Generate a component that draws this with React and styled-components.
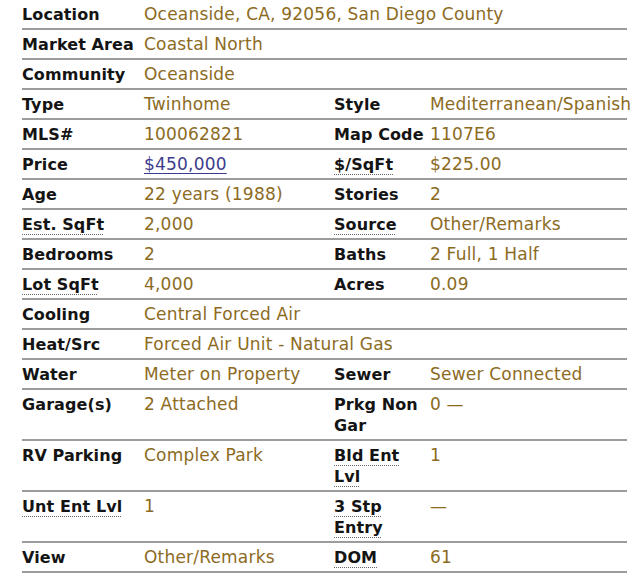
import React from 'react'
import styled, { createGlobalStyle } from 'styled-components'

const GlobalStyle = createGlobalStyle`
  body {
    margin: 0;
    background: #fff;
    font-family: "DejaVu Sans", Verdana, sans-serif;
  }
`

const Table = styled.table`
  margin-left: 22px;
  width: 605px;
  border-collapse: collapse;
  table-layout: fixed;
  font-size: 16px;
  line-height: 21px;
`

const Row = styled.tr`
  border-bottom: 2px solid #9c9c9c;
`

const Label = styled.th`
  padding: 4px 0 3px;
  text-align: left;
  vertical-align: top;
  font-weight: bold;
  color: #141414;
  letter-spacing: 0.1px;
`

const Value = styled.td`
  padding: 4px 0 3px;
  vertical-align: top;
  font-size: 17px;
  letter-spacing: 0.2px;
  color: #8c6b1f;
  white-space: ${(p) => (p.$nowrap ? 'nowrap' : 'normal')};
`

const Abbr = styled.abbr`
  text-decoration: underline dotted #666;
  text-decoration-thickness: 1px;
  text-underline-offset: 4px;
`

const PriceLink = styled.a`
  color: #3c3c8e;
  text-decoration: underline;
  text-underline-offset: 3px;
`

const wide = [
  ['Location', 'Oceanside, CA, 92056, San Diego County'],
  ['Market Area', 'Coastal North'],
  ['Community', 'Oceanside']
]

const pairs = [
  [{ label: 'Type' }, 'Twinhome', { label: 'Style' }, 'Mediterranean/Spanish'],
  [{ label: 'MLS#' }, '100062821', { label: 'Map Code' }, '1107E6'],
  [{ label: 'Price' }, 'price', { label: '$/SqFt', abbr: true }, '$225.00'],
  [{ label: 'Age' }, '22 years (1988)', { label: 'Stories' }, '2'],
  [{ label: 'Est. SqFt', abbr: true }, '2,000', { label: 'Source', abbr: true }, 'Other/Remarks'],
  [{ label: 'Bedrooms' }, '2', { label: 'Baths' }, '2 Full, 1 Half'],
  [{ label: 'Lot SqFt', abbr: true }, '4,000', { label: 'Acres' }, '0.09']
]

const wide2 = [
  ['Cooling', 'Central Forced Air'],
  ['Heat/Src', 'Forced Air Unit - Natural Gas']
]

const pairs2 = [
  [{ label: 'Water' }, 'Meter on Property', { label: 'Sewer' }, 'Sewer Connected'],
  [{ label: 'Garage(s)' }, '2 Attached', { label: 'Prkg Non Gar' }, '0 \u2014'],
  [{ label: 'RV Parking' }, 'Complex Park', { label: 'Bld Ent Lvl', abbr: true }, '1'],
  [{ label: 'Unt Ent Lvl', abbr: true }, '1', { label: '3 Stp Entry', abbr: true }, '\u2014'],
  [{ label: 'View' }, 'Other/Remarks', { label: 'DOM', abbr: true }, '61']
]

const renderLabel = (l) => (l.abbr ? <Abbr>{l.label}</Abbr> : l.label)

const renderValue = (v) =>
  v === 'price' ? <PriceLink href="#">$450,000</PriceLink> : v

const WideRow = ({ label, value }) => (
  <Row>
    <Label>{label}</Label>
    <Value colSpan={3} $nowrap>{value}</Value>
  </Row>
)

const PairRow = ({ cells }) => (
  <Row>
    <Label>{renderLabel(cells[0])}</Label>
    <Value>{renderValue(cells[1])}</Value>
    <Label>{renderLabel(cells[2])}</Label>
    <Value $nowrap>{cells[3]}</Value>
  </Row>
)

const App = () => (
  <>
    <GlobalStyle />
    <Table>
      <colgroup>
        <col style={{ width: 122 }} />
        <col style={{ width: 190 }} />
        <col style={{ width: 96 }} />
        <col style={{ width: 197 }} />
      </colgroup>
      <tbody>
        {wide.map(([l, v]) => <WideRow key={l} label={l} value={v} />)}
        {pairs.map((c) => <PairRow key={c[0].label} cells={c} />)}
        {wide2.map(([l, v]) => <WideRow key={l} label={l} value={v} />)}
        {pairs2.map((c) => <PairRow key={c[0].label} cells={c} />)}
      </tbody>
    </Table>
  </>
)

export default App
